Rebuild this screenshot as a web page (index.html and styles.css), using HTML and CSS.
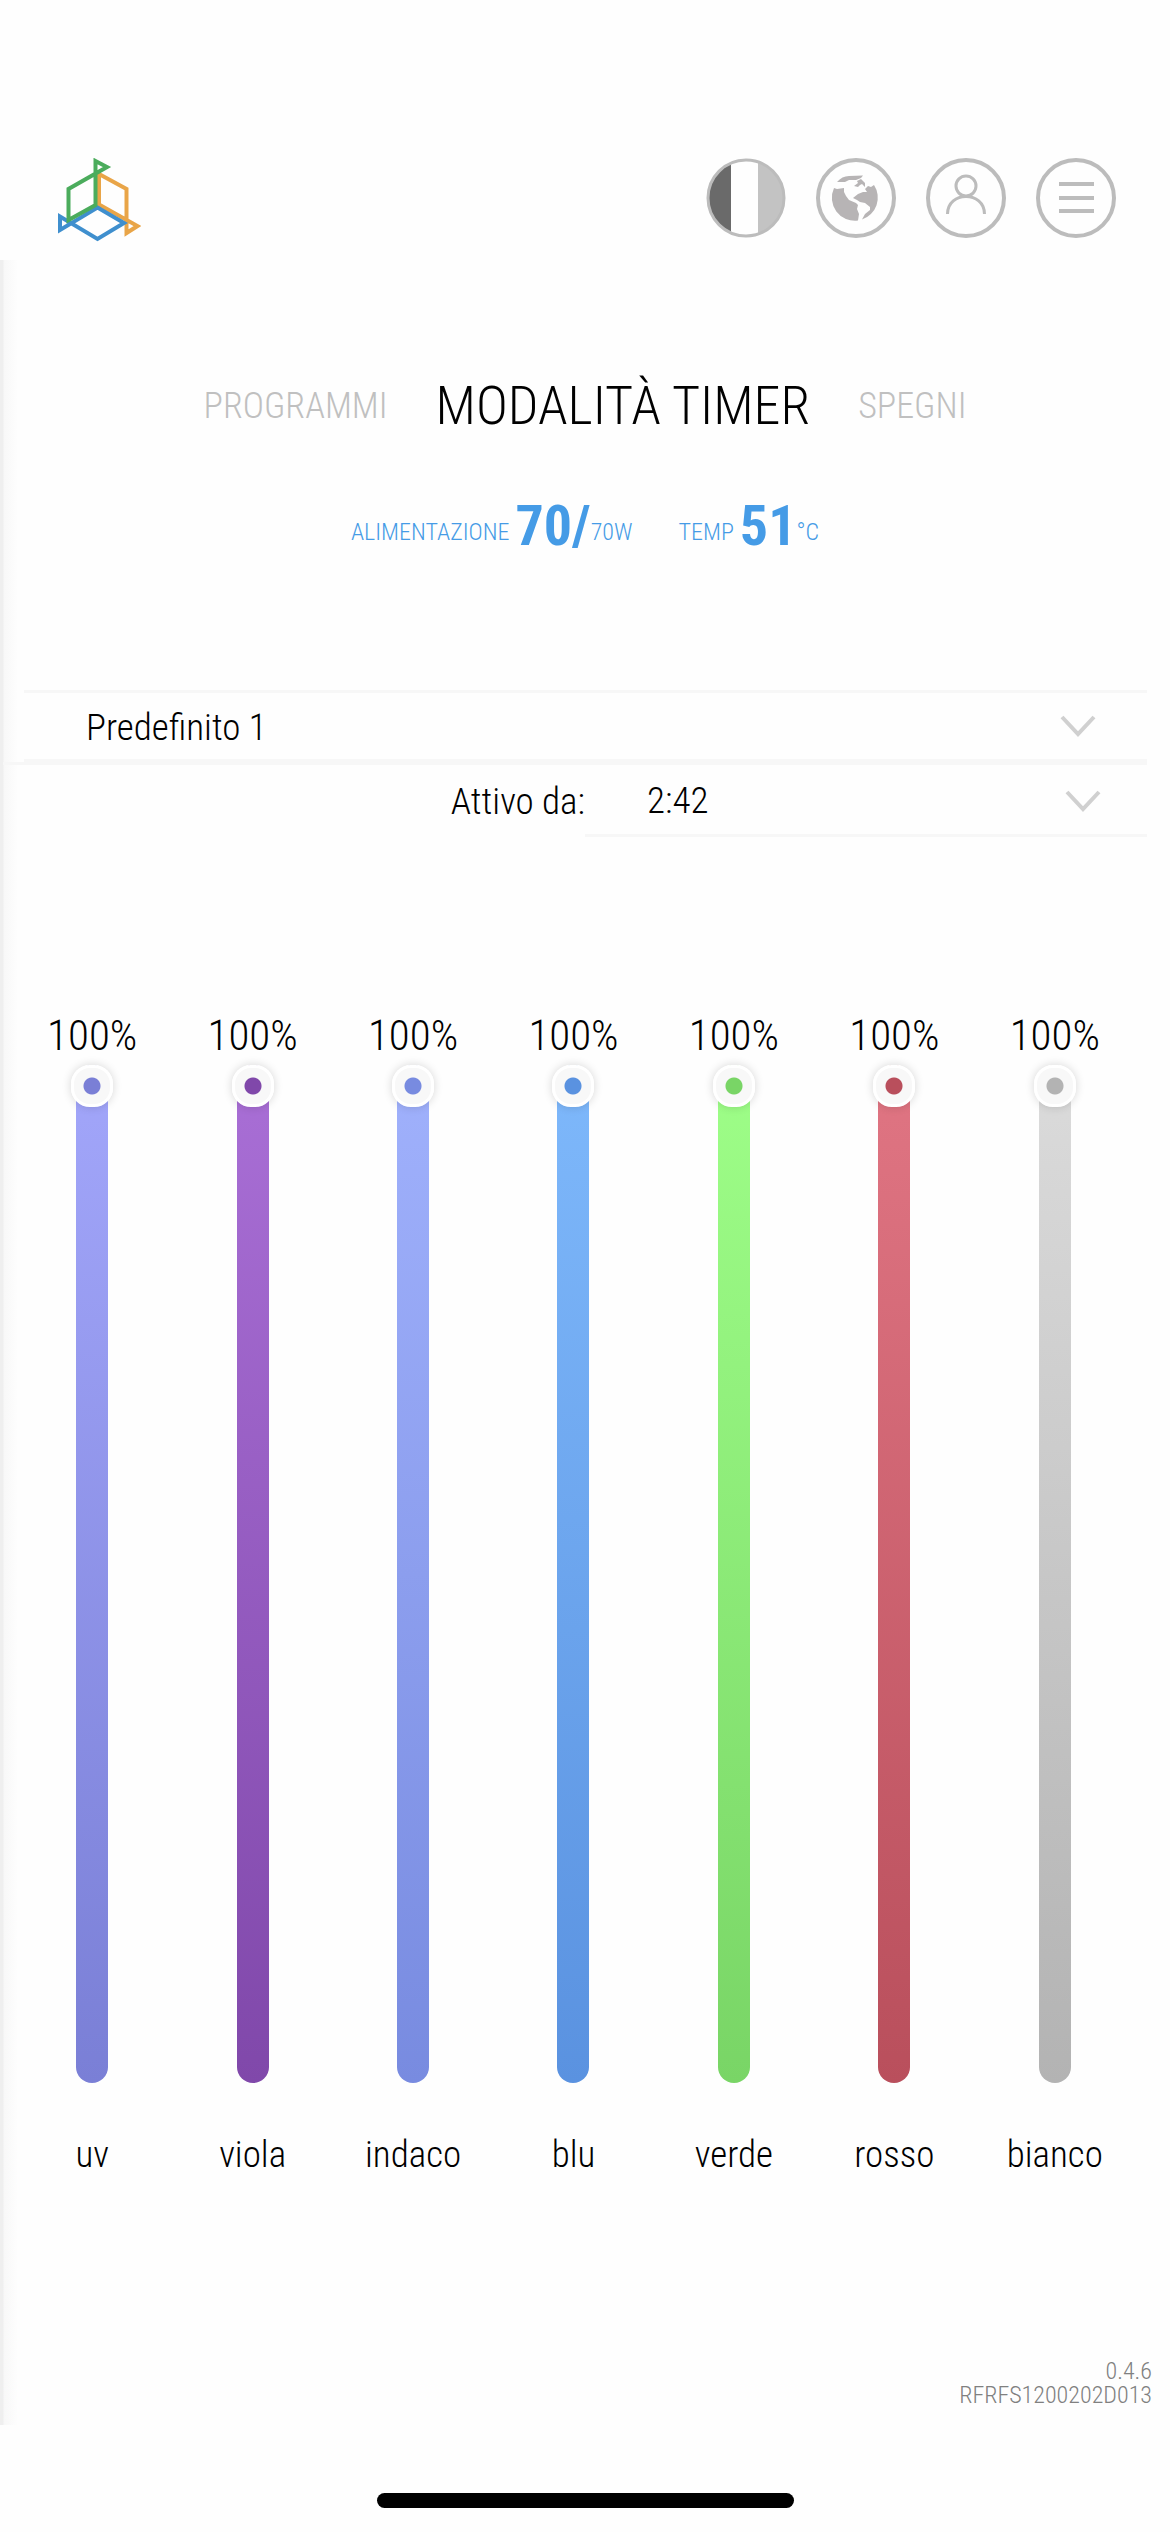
FILE: index.html
```html
<!DOCTYPE html>
<html lang="it">
  <head>
    <meta charset="UTF-8" />
    <meta name="viewport" content="width=device-width, initial-scale=1" />
    <title>Modalità timer</title>
    <link rel="stylesheet" href="styles.css">
  </head>
  <body>
    <header class="topbar">
      <a class="logo" href="#" aria-label="Home">
        <svg width="84" height="84" viewBox="0 0 84 84" fill="none" stroke-width="4">
          <path stroke="#e9a548" d="M42 16 L69.5 31 V75 L80.5 68 L42 46.5 Z" />
          <path stroke="#3f8fce" d="M40.5 49.5 L67 65 L40.5 81 L3 58.5 V72 Z" />
          <path stroke="#4bac5c" d="M38.5 3 L50 9 L11.5 31 V62 L38.5 47 Z" />
        </svg>
      </a>
      <div class="tools">
        <button class="tool" type="button" aria-label="Lingua">
          <svg viewBox="0 0 80 80">
            <path fill="#6a6a6a" d="M25 6 A37 37 0 0 0 25 74 Z" />
            <path fill="#c3c3c3" d="M52 4 A38 38 0 0 1 52 76 Z" />
            <circle cx="40" cy="40" r="38" fill="none" stroke="#bcbcbc" stroke-width="3" />
          </svg>
        </button>
        <button class="tool" type="button" aria-label="Rete">
          <svg viewBox="0 0 80 80">
            <circle cx="40" cy="40" r="38" fill="none" stroke="#bcbcbc" stroke-width="4" />
            <g fill="#b7b4b5">
              <path d="M18 30 L21 31 L28 30 L28 34 L30 38 L33 42 L40 45 L42 47 L41 51 L43 56 L42 62.500 A23 23 0 0 1 18 30 Z" />
              <path d="M46 61.500 L49 56 L54 52 L54 49 L49 45 L44 44 L41 42 L37 40 L42 36 L47 34 L51 34 L49 31 L52 28 L55 29 L58 27 A23 23 0 0 1 46 61.500 Z" />
              <path d="M21 24 Q26 18 33 18 L47 17.500 L45 20 L40 22 L33 22 L29 24 Z" />
              <path d="M38 28 L42 25 L41 23 L45 21 L49 25 L49 29 L46 26 L44 27 L42 29 Z" />
            </g>
          </svg>
        </button>
        <button class="tool" type="button" aria-label="Profilo">
          <svg viewBox="0 0 80 80" fill="none" stroke="#bcbcbc">
            <circle cx="40" cy="40" r="38" stroke-width="4" />
            <circle cx="40" cy="28" r="10" stroke-width="3" />
            <path stroke-width="3" d="M21.500 56 C21.500 32.500 58.500 32.500 58.500 56" />
          </svg>
        </button>
        <button class="tool" type="button" aria-label="Menu">
          <svg viewBox="0 0 80 80" fill="none" stroke="#bcbcbc" stroke-width="4">
            <circle cx="40" cy="40" r="38" />
            <path d="M23 26 H58 M23 40 H58 M23 53 H58" />
          </svg>
        </button>
      </div>
    </header>

    <main class="panel">
      <nav class="modes">
        <a href="#">PROGRAMMI</a>
        <a class="active" href="#">MODALITÀ TIMER</a>
        <a href="#">SPEGNI</a>
      </nav>

      <div class="stats">
        <p class="stat"><span>ALIMENTAZIONE</span> <strong>70/</strong><span>70W</span></p>
        <p class="stat"><span>TEMP</span> <strong>51</strong><span>°C</span></p>
      </div>

      <form class="settings">
        <div class="dropdown">
          <select id="program" aria-label="Programma">
            <option>Predefinito 1</option>
            <option>Predefinito 2</option>
          </select>
          <svg class="chevron" viewBox="0 0 36 22"><path d="M2 2 L18 19 L34 2" /></svg>
        </div>
        <div class="start">
          <label for="start-time">Attivo da:</label>
          <div class="dropdown">
            <select id="start-time">
              <option>2:42</option>
              <option>3:00</option>
            </select>
            <svg class="chevron" viewBox="0 0 36 22"><path d="M2 2 L18 19 L34 2" /></svg>
          </div>
        </div>
      </form>

      <section class="channels">
        <div class="channel uv">
          <output for="ch-uv">100%</output>
          <input type="range" id="ch-uv" min="0" max="100" value="100" />
          <label for="ch-uv">uv</label>
        </div>
        <div class="channel viola">
          <output for="ch-viola">100%</output>
          <input type="range" id="ch-viola" min="0" max="100" value="100" />
          <label for="ch-viola">viola</label>
        </div>
        <div class="channel indaco">
          <output for="ch-indaco">100%</output>
          <input type="range" id="ch-indaco" min="0" max="100" value="100" />
          <label for="ch-indaco">indaco</label>
        </div>
        <div class="channel blu">
          <output for="ch-blu">100%</output>
          <input type="range" id="ch-blu" min="0" max="100" value="100" />
          <label for="ch-blu">blu</label>
        </div>
        <div class="channel verde">
          <output for="ch-verde">100%</output>
          <input type="range" id="ch-verde" min="0" max="100" value="100" />
          <label for="ch-verde">verde</label>
        </div>
        <div class="channel rosso">
          <output for="ch-rosso">100%</output>
          <input type="range" id="ch-rosso" min="0" max="100" value="100" />
          <label for="ch-rosso">rosso</label>
        </div>
        <div class="channel bianco">
          <output for="ch-bianco">100%</output>
          <input type="range" id="ch-bianco" min="0" max="100" value="100" />
          <label for="ch-bianco">bianco</label>
        </div>
      </section>

      <footer class="version">
        <div>0.4.6</div>
        <div>RFRFS1200202D013</div>
      </footer>
    </main>

    <div class="home-bar"></div>
  </body>
</html>
```

FILE: styles.css
```css
* {
  box-sizing: border-box;
}

body {
  display: flex;
  flex-direction: column;
  min-height: 100vh;
  margin: 0;
  font-family: "Roboto Condensed", "Liberation Sans Narrow", "Liberation Sans", sans-serif;
  font-size: 37px;
  font-weight: 350;
  color: #000;
  background-color: #fefefe;
}

a {
  color: inherit;
  text-decoration: none;
}

/* header */
.topbar {
  display: flex;
  justify-content: space-between;
  align-items: flex-start;
  padding: 158px 54px 18px 57px;
}

.logo svg,
.tool svg {
  display: block;
}

.tools {
  display: flex;
  gap: 30px;
}

.tool {
  width: 80px;
  height: 80px;
  padding: 0;
  border: none;
  background: none;
  cursor: pointer;
}

/* panel with the soft edge on the left */
.panel {
  flex: 1;
  display: flex;
  flex-direction: column;
  background: linear-gradient(to right, #efefef 3px, #f8f8f8 4px, #fefefe 18px);
}

.modes {
  display: flex;
  justify-content: center;
  align-items: center;
  gap: 48px;
  padding-top: 114px;
  font-size: 36px;
  line-height: 64px;
  color: #c0c0c0;
}

.modes .active {
  font-size: 54px;
  color: #000;
}

.stats {
  display: flex;
  justify-content: center;
  gap: 46px;
  padding-top: 56px;
  font-size: 24px;
  color: #459be6;
}

.stat {
  display: flex;
  align-items: flex-end;
  margin: 0;
  line-height: 52px;
}

.stat strong {
  margin-left: 6px;
  font-size: 56px;
  font-weight: 700;
  line-height: 64px;
}

/* dropdowns */
.settings {
  padding: 132px 23px 0 0;
}

.settings > .dropdown {
  margin-left: 24px;
}

.dropdown {
  display: grid;
  align-items: center;
}

.dropdown select,
.chevron {
  grid-area: 1 / 1;
}

.dropdown select {
  width: 100%;
  height: 72px;
  padding: 2px 62px 0;
  border: solid #f7f7f7;
  border-width: 3px 0;
  border-radius: 0;
  appearance: none;
  background: none;
  font: inherit;
  color: inherit;
}

.chevron {
  justify-self: end;
  width: 36px;
  margin-right: 51px;
  fill: none;
  stroke: #d0d0d0;
  stroke-width: 4;
  pointer-events: none;
}

.start {
  display: grid;
  grid-template-columns: 1fr 1fr;
  align-items: center;
  margin-left: 3px;
  padding-left: 20px;
  border-top: 3px solid #f7f7f7;
}

.start label {
  text-align: right;
}

.start select {
  border-top: none;
}

.start .chevron {
  margin-right: 46px;
}

/* sliders */
.channels {
  display: grid;
  grid-template-columns: repeat(7, 1fr);
  padding: 168px 35px 0 12px;
}

.channel {
  display: flex;
  flex-direction: column;
  align-items: center;
}

.channel output {
  font-size: 43px;
  line-height: 60px;
}

.channel input {
  writing-mode: vertical-lr;
  direction: rtl;
  width: 32px;
  height: 1018px;
  margin: 0;
  border-radius: 16px;
  appearance: none;
  background: linear-gradient(var(--light), var(--dark));
}

.channel input::-webkit-slider-thumb {
  width: 42px;
  height: 42px;
  border: 3px solid #fff;
  border-radius: 19px;
  appearance: none;
  background: radial-gradient(circle, var(--dark) 8px, #f8f8f8 9px);
  box-shadow: 0 0 10px rgba(0, 0, 0, 0.16);
}

.channel label {
  margin-top: 48px;
  line-height: 48px;
}

.uv {
  --light: #a2a6fa;
  --dark: #7a7fd6;
}

.viola {
  --light: #a96fd6;
  --dark: #8048aa;
}

.indaco {
  --light: #a0b1fc;
  --dark: #788be0;
}

.blu {
  --light: #7eb8fb;
  --dark: #5a92e0;
}

.verde {
  --light: #9efe88;
  --dark: #79d566;
}

.rosso {
  --light: #e07583;
  --dark: #b94f5c;
}

.bianco {
  --light: #dbdbdb;
  --dark: #b3b3b3;
}

.version {
  margin-top: auto;
  padding: 0 18px 18px 0;
  text-align: right;
  font-size: 24px;
  line-height: 24px;
  color: #808080;
}

/* home indicator */
.home-bar {
  width: 417px;
  height: 15px;
  margin: 68px auto 24px;
  border-radius: 8px;
  background-color: #000;
}
```
